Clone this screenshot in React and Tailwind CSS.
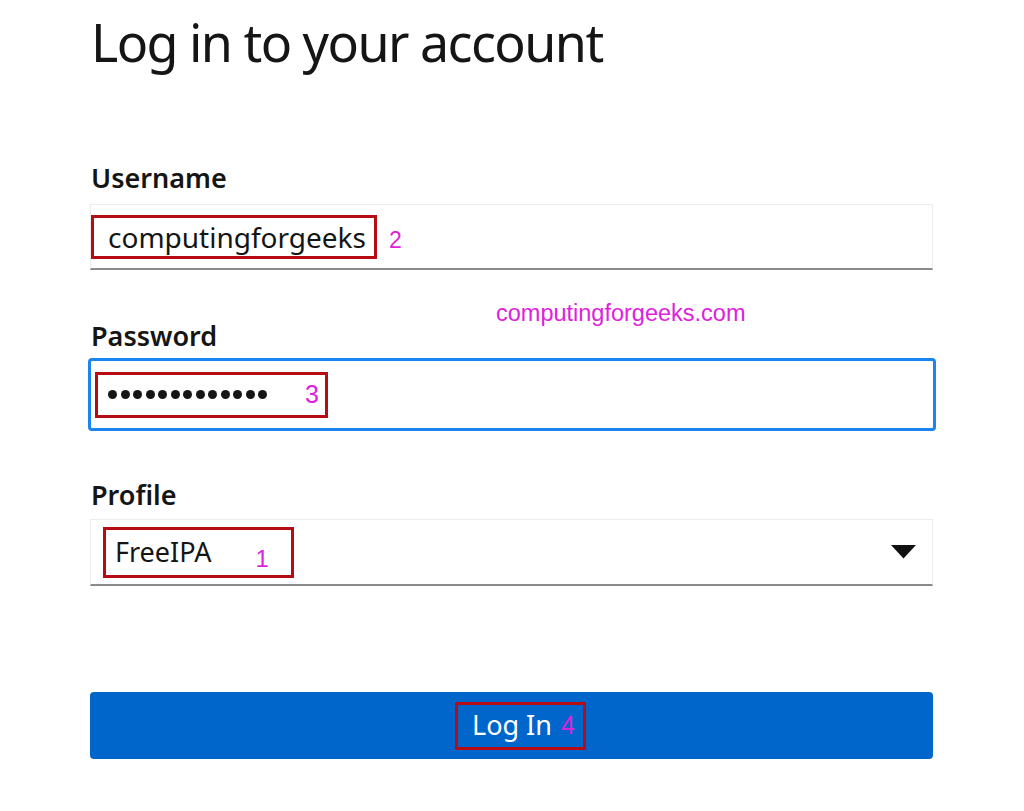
import React from 'react';

const font = { fontFamily: '"Noto Sans", "Open Sans", sans-serif' };

function Mark({ children, className = '' }) {
  return (
    <span className={`text-[#dd22dd] ${className}`} style={{ fontFamily: '"Liberation Sans", Arial, sans-serif' }}>
      {children}
    </span>
  );
}

export default function App() {
  return (
    <div className="relative w-[1024px] h-[811px] bg-white text-[#151515] overflow-hidden" style={font}>
      <div className="pl-[90px] w-[936px]">
        <h1 className="mt-[12px] text-[52px] leading-[60px] font-normal pl-[1px] tracking-[-1.55px]">
          Log in to your account
        </h1>

        <label className="block mt-[90px] text-[27px] leading-[32px] font-semibold pl-[1px]">Username</label>
        <div className="mt-[10px] w-[843px] h-[66px] border border-[#ececec] border-b-2 border-b-[#8a8a8a] flex items-center">
          <span className="flex items-center h-[44px] w-[286px] border-[3px] border-[#b80c14] pl-[14px] text-[28px]">
            computingforgeeks
          </span>
          <Mark className="ml-[12px] text-[23px] mt-[8px]">2</Mark>
        </div>

        <label className="block mt-[50px] text-[27px] leading-[32px] font-semibold pl-[1px]">Password</label>
        <div className="mt-[6px] -ml-[2px] w-[848px] h-[73px] border-[3px] border-[#1a84f0] rounded-[4px] flex items-center pl-[4px]">
          <span className="flex items-center h-[46px] w-[233px] border-[3px] border-[#b80c14] pl-[10px]">
            <span className="flex gap-[3.5px]">
              {Array.from({ length: 13 }).map((_, i) => (
                <span key={i} className="block w-[9px] h-[9px] rounded-full bg-[#151515]" />
              ))}
            </span>
            <Mark className="ml-[38px] text-[25px]">3</Mark>
          </span>
        </div>

        <label className="block mt-[48px] text-[27px] leading-[32px] font-semibold pl-[1px]">Profile</label>
        <div className="mt-[8px] w-[843px] h-[67px] border border-[#ececec] border-b-2 border-b-[#8a8a8a] flex items-center pl-[12px] pr-[16px]">
          <span className="flex items-center h-[51px] w-[191px] border-[3px] border-[#b80c14] pl-[9px] text-[27px]">
            FreeIPA
            <Mark className="ml-[44px] mt-[14px] text-[24px]">1</Mark>
          </span>
          <svg className="ml-auto" width="25" height="14" viewBox="0 0 25 14">
            <polygon points="0,0 25,0 12.5,13.5" fill="#111" />
          </svg>
        </div>

        <button className="mt-[106px] w-[843px] h-[67px] bg-[#0066cc] rounded-[4px] flex items-center justify-center">
          <span className="ml-[18px] flex items-center h-[48px] w-[131px] border-[3px] border-[#b80c14] pl-[14px] text-white text-[27px]">
            Log In
            <Mark className="ml-[9px] text-[25px]">4</Mark>
          </span>
        </button>
      </div>

      <Mark className="absolute left-[496px] top-[296px] text-[23.5px]">computingforgeeks.com</Mark>
    </div>
  );
}
